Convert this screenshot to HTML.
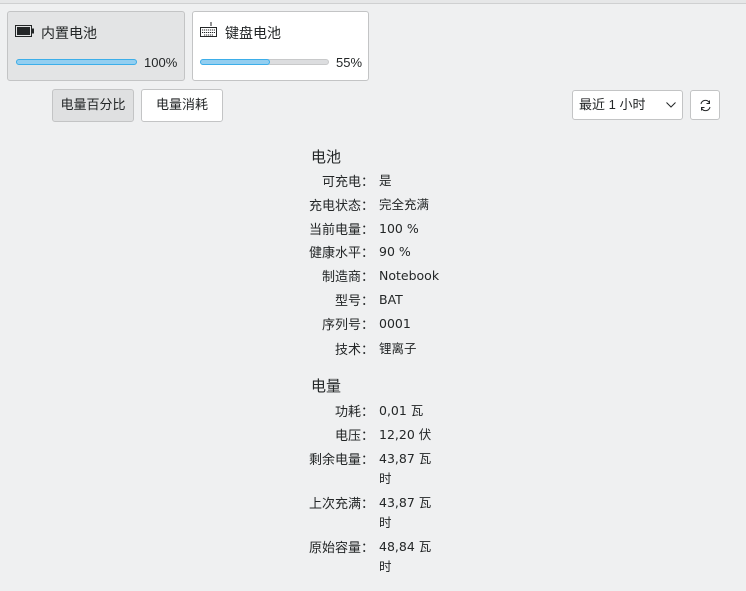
<!DOCTYPE html>
<html><head><meta charset="utf-8"><style>
*{margin:0;padding:0;box-sizing:border-box}
body{width:746px;height:591px;background:#eff0f1;font-family:"Liberation Sans","Noto Sans CJK SC",sans-serif;color:#232627;position:relative;overflow:hidden;font-size:13px}
.a{position:absolute}
.card{position:absolute;border:1px solid #c3c4c5;border-radius:3px}
.bar{position:absolute;height:6px;border-radius:3px;background:#dcdddf;border:1px solid #c8c9ca}
.fill{position:absolute;left:-1px;top:-1px;height:6px;border-radius:3px;background:#93cef0;border:1px solid #3daee9}
.btn{position:absolute;border:1px solid #c3c4c5;border-radius:3px;background:#fff;font-size:13px;text-align:center;line-height:30px}
.l{position:absolute;width:92px;text-align:right;font-size:13px;left:282px;font-family:"Noto Sans CJK SC",sans-serif;line-height:20px}
.v{position:absolute;left:379px;font-size:12.5px;width:62px;line-height:20px;font-family:"DejaVu Sans","Noto Sans CJK SC",sans-serif}
.h{position:absolute;left:311px;font-size:15px}
</style></head><body>
<div class="a" style="left:0;top:0;width:746px;height:4px;border-bottom:1px solid #cfd0d1;background:#e6e7e8"></div>
<div class="card" style="left:7px;top:11px;width:178px;height:70px;background:#e3e4e5"></div>
<svg class="a" style="left:15px;top:25px" width="20" height="12"><rect x="0.5" y="0.5" width="16" height="11" fill="none" stroke="#232627"/><rect x="2" y="2" width="13" height="8" fill="#232627"/><rect x="17" y="3.5" width="2" height="5" fill="#232627"/></svg>
<div class="a" style="left:41px;top:23px;font-size:14px">内置电池</div>
<div class="bar" style="left:16px;top:59px;width:121px"><div class="fill" style="width:121px"></div></div>
<div class="a" style="left:144px;top:55px;font-size:13px">100%</div>
<div class="card" style="left:192px;top:11px;width:177px;height:70px;background:#fff"></div>
<svg class="a" style="left:199px;top:21px" width="20" height="18"><path d="M12 1v4" stroke="#232627" fill="none"/><rect x="1.5" y="6.5" width="16" height="9" fill="none" stroke="#232627"/><path d="M3 9h13M3 11.5h13M5 14h9" stroke="#232627" stroke-dasharray="1.2 .8"/></svg>
<div class="a" style="left:225px;top:23px;font-size:14px">键盘电池</div>
<div class="bar" style="left:200px;top:59px;width:129px"><div class="fill" style="width:70px"></div></div>
<div class="a" style="left:336px;top:55px;font-size:13px">55%</div>
<div class="btn" style="left:52px;top:89px;width:82px;height:33px;background:#dfe0e1">电量百分比</div>
<div class="btn" style="left:141px;top:89px;width:82px;height:33px">电量消耗</div>
<div class="btn" style="left:572px;top:90px;width:111px;height:30px;text-align:left;padding-left:6px;font-size:13px;line-height:28px">最近 1 小时<svg class="a" style="left:93px;top:11px" width="10" height="6"><path d="M.5.5l4.5 4.5 4.5-4.5" fill="none" stroke="#232627"/></svg></div>
<div class="btn" style="left:690px;top:90px;width:30px;height:30px"><svg class="a" style="left:8px;top:8px" width="13" height="13"><path d="M2 5A4.5 4.5 0 0 1 10.5 4M11 8A4.5 4.5 0 0 1 2.5 9" fill="none" stroke="#232627"/><path d="M10.5 1.5v3h-3M2.5 11.5v-3h3" fill="none" stroke="#232627"/></svg></div>
<div class="h" style="top:146px">电池</div>
<div class="l" style="top:171px">可充电：</div><div class="v" style="top:171px">是</div>
<div class="l" style="top:195px">充电状态：</div><div class="v" style="top:195px">完全充满</div>
<div class="l" style="top:219px">当前电量：</div><div class="v" style="top:219px">100 %</div>
<div class="l" style="top:242px">健康水平：</div><div class="v" style="top:242px">90 %</div>
<div class="l" style="top:266px">制造商：</div><div class="v" style="top:266px">Notebook</div>
<div class="l" style="top:290px">型号：</div><div class="v" style="top:290px">BAT</div>
<div class="l" style="top:314px">序列号：</div><div class="v" style="top:314px">0001</div>
<div class="l" style="top:339px">技术：</div><div class="v" style="top:339px">锂离子</div>
<div class="h" style="top:375px">电量</div>
<div class="l" style="top:401px">功耗：</div><div class="v" style="top:401px">0,01 瓦</div>
<div class="l" style="top:425px">电压：</div><div class="v" style="top:425px">12,20 伏</div>
<div class="l" style="top:449px">剩余电量：</div><div class="v" style="top:449px">43,87 瓦<br>时</div>
<div class="l" style="top:493px">上次充满：</div><div class="v" style="top:493px">43,87 瓦<br>时</div>
<div class="l" style="top:537px">原始容量：</div><div class="v" style="top:537px">48,84 瓦<br>时</div>
</body></html>
